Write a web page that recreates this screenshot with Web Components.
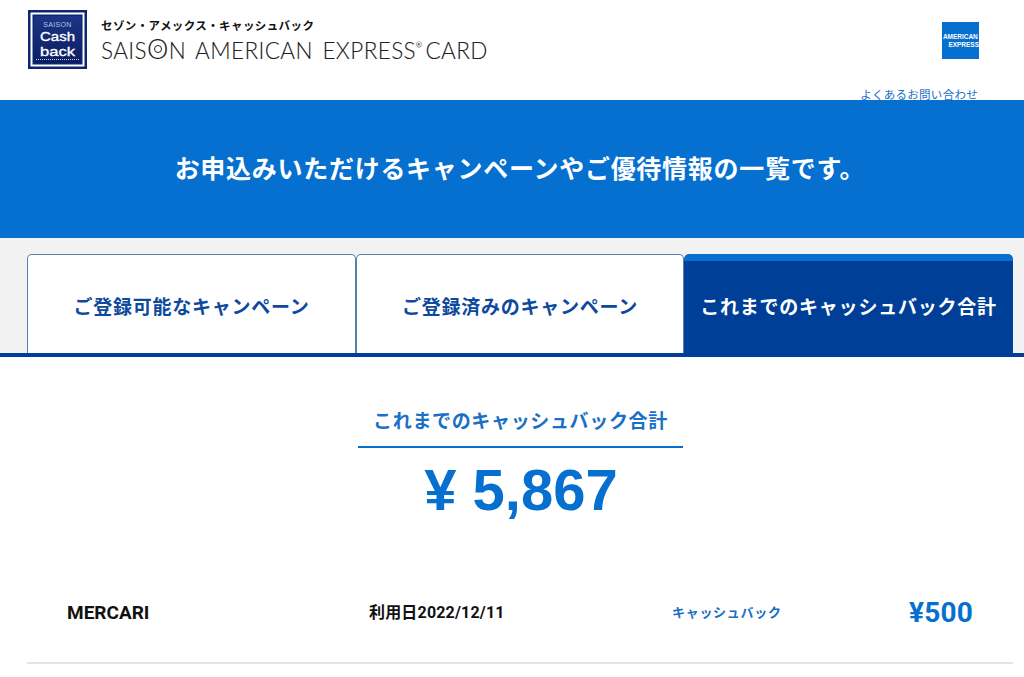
<!DOCTYPE html>
<html lang="ja"><head><meta charset="utf-8"><title>SAISON AMEX Cashback</title>
<style>
html,body{margin:0;padding:0;background:#fff;overflow:hidden}
body{width:1024px;height:677px;font-family:"Noto Sans CJK JP","Noto Sans",sans-serif}
</style></head><body>
<cb-app></cb-app>
<script>
function def(name,css,html){
  customElements.define(name,class extends HTMLElement{
    constructor(){super();const r=this.attachShadow({mode:'open'});r.innerHTML='<style>'+css+'</style>'+html;}
  });
}
const CJK='"Noto Sans CJK JP","Noto Sans",sans-serif';
def('cb-logo',`:host{display:block;flex:none;width:59px;height:59px}svg{display:block}text{font-family:"Liberation Sans",Arial,sans-serif;text-anchor:middle}`,
`<svg width="59" height="59" viewBox="0 0 59 59">
<defs><linearGradient id="g" x1="0" y1="0" x2="0" y2="1"><stop offset="0" stop-color="#1c3584"/><stop offset="1" stop-color="#0b1d62"/></linearGradient></defs>
<rect width="59" height="59" fill="#0c2670"/>
<rect x="3.5" y="3.5" width="52" height="52" fill="#0c2670" stroke="#fff" stroke-width="2"/>
<rect x="6" y="6" width="47" height="47" rx="2" fill="url(#g)"/>
<text x="29.5" y="16.5" font-size="7" fill="#b9c3e4" letter-spacing=".3">SAISON</text>
<text x="29.5" y="31" font-size="13.5" fill="#fff" stroke="#fff" stroke-width=".35" textLength="35" lengthAdjust="spacingAndGlyphs">Cash</text>
<text x="29.5" y="45.5" font-size="13.5" fill="#fff" stroke="#fff" stroke-width=".35" textLength="35" lengthAdjust="spacingAndGlyphs">back</text>
<line x1="8" x2="51" y1="49.5" y2="49.5" stroke="#cfd6ee" stroke-width="1" stroke-dasharray="1 1"/>
</svg>`);
def('cb-brand',`:host{display:flex;flex-direction:column;margin-left:14px;color:#222}
.t{font:700 11.5px/14px ${CJK};letter-spacing:.4px;color:#111;margin-top:8px}
.b{font:300 22.5px/26px Lato,"Noto Sans",sans-serif;letter-spacing:.4px;color:#222;-webkit-text-stroke:.1px #222;margin-top:6px;white-space:nowrap;word-spacing:3px}
.o{position:relative;display:inline-block;font-size:27px;line-height:20px}
.o::after{content:"";position:absolute;left:50%;top:50%;width:6px;height:6px;margin:-4px 0 0 -4px;border:1px solid #222;border-radius:50%;box-sizing:content-box}
sup{font-size:7px;line-height:0;vertical-align:11px;letter-spacing:0}
.g{word-spacing:-3px}`,
`<span class="t">セゾン・アメックス・キャッシュバック</span><span class="b">SAIS<span class="o">O</span>N AMERICAN EXPRESS<sup>®</sup><span class="g"> </span>CARD</span>`);
def('cb-amex',`:host{display:flex;flex-direction:column;justify-content:center;align-items:flex-end;width:37px;height:37px;background:#0670d0;color:#fff;box-sizing:border-box;font:700 7.2px/8.2px "Liberation Sans",Arial,sans-serif;overflow:hidden;white-space:nowrap;padding-top:1px}
span{display:block}.a{align-self:center;transform:scaleX(.9)}.e{margin-right:0;transform:scaleX(.9);transform-origin:right}`,
`<span class="a">AMERICAN</span><span class="e">EXPRESS</span>`);
def('cb-header',`:host{display:block;height:100px;box-sizing:border-box;padding:10px 45px 0 28px;background:#fff}
.r{display:flex;align-items:flex-start}
.sp{flex:1}
cb-amex{margin-top:12px}
a{display:block;text-align:right;font:400 11.5px/14px ${CJK};letter-spacing:.28px;color:#1a70c6;text-decoration:none;margin:18px 1px 0 0}`,
`<div class="r"><cb-logo></cb-logo><cb-brand></cb-brand><div class="sp"></div><cb-amex></cb-amex></div><a>よくあるお問い合わせ</a>`);
def('cb-hero',`:host{display:flex;height:138px;align-items:center;justify-content:center;background:#0670d0;color:#fff;font:700 25px/34px ${CJK};letter-spacing:.72px;box-sizing:border-box;padding:0 0 4px 16px}`,`<slot></slot>`);
def('cb-tab',`:host{display:flex;align-items:center;justify-content:center;box-sizing:border-box;height:99px;background:#fff;border:1px solid #5b7fa8;border-bottom:0;border-radius:5px 5px 0 0;color:#0d4a9e;font:700 19px/26px ${CJK};letter-spacing:.76px;white-space:nowrap;padding-top:3px}
:host([active]){background:#003f98;color:#fff;border:0;border-top:7px solid #0670d0;padding-top:0;padding-bottom:2px}`,`<slot></slot>`);
def('cb-tabs',`:host{display:block;background:#f2f2f2;padding-top:16px;height:119px;box-sizing:border-box;border-bottom:4px solid #003f98}
.g{display:grid;grid-template-columns:329px 328px 329px;margin-left:27px;width:986px}`,`<div class="g"><slot></slot></div>`);
def('cb-total',`:host{display:flex;flex-direction:column;align-items:center;color:#0670d0;margin:50px 0 0 17px}
.l{width:325px;box-sizing:border-box;text-align:center;font:700 19px/26px ${CJK};letter-spacing:.65px;padding-bottom:13px;border-bottom:2px solid #0670d0;color:#1a70c6}
.v{font:700 58px/70px "Liberation Sans",Arial,sans-serif;margin-top:7px;white-space:pre;padding-left:1px}`,
`<div class="l">これまでのキャッシュバック合計</div><div class="v">¥ 5,867</div>`);
def('cb-row',`:host{display:grid;grid-template-columns:302px 303px 226px 1fr;align-items:center;margin:72px 11px 0 27px;padding:0 40px 33px 40px;height:67px;box-sizing:border-box;border-bottom:2px solid #e4e4e4;white-space:nowrap}
.n{font:700 19px/24px Roboto,"Liberation Sans",sans-serif;color:#111}
.d{font:700 16px/22px Roboto,${CJK};color:#111;letter-spacing:.18px}
.k{font:700 13px/18px ${CJK};color:#1a70c6;letter-spacing:.7px;padding-bottom:2px}
.a{font:700 28px/32px Roboto,"Liberation Sans",sans-serif;color:#0670d0;justify-self:end;letter-spacing:.2px}`,
`<span class="n">MERCARI</span><span class="d">利用日2022/12/11</span><span class="k">キャッシュバック</span><span class="a">¥500</span>`);
def('cb-app',`:host{display:block}`,
`<cb-header></cb-header><cb-hero>お申込みいただけるキャンペーンやご優待情報の一覧です。</cb-hero>
<cb-tabs><cb-tab>ご登録可能なキャンペーン</cb-tab><cb-tab>ご登録済みのキャンペーン</cb-tab><cb-tab active>これまでのキャッシュバック合計</cb-tab></cb-tabs>
<cb-total></cb-total><cb-row></cb-row>`);
</script></body></html>
